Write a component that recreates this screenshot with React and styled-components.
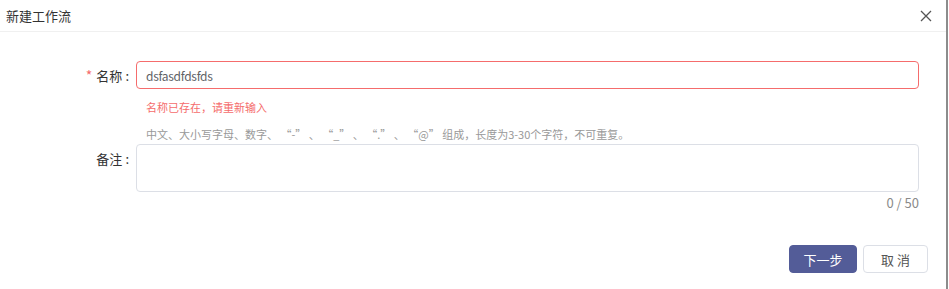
import React from "react";
import styled, { createGlobalStyle } from "styled-components";

const Global = createGlobalStyle`
  html, body { margin: 0; padding: 0; background: #fff; }
  body { font-family: "Noto Sans CJK SC", sans-serif; }
  * { box-sizing: border-box; }
`;

const Dialog = styled.div`
  width: 948px;
  height: 289px;
  background: #fff;
  border-right: 2px solid #8c8c8c;
  display: flex;
  flex-direction: column;
`;

const Header = styled.div`
  height: 32px;
  border-bottom: 1px solid #f0f0f0;
  display: flex;
  align-items: center;
  justify-content: space-between;
  padding: 0 14px 0 6px;
`;

const Title = styled.div`
  font-family: "Noto Sans CJK SC", sans-serif;
  font-size: 13px;
  color: #333;
`;

const Close = styled.button`
  border: 0;
  background: none;
  padding: 0;
  width: 13px;
  height: 13px;
  display: flex;
  align-items: center;
  justify-content: center;
  cursor: pointer;
`;

const Body = styled.div`
  padding: 29px 27px 0 0;
  display: flex;
  flex-direction: column;
`;

const Row = styled.div`
  display: grid;
  grid-template-columns: 136px 1fr;
  align-items: ${(p) => (p.$top ? "start" : "center")};
`;

const Label = styled.label`
  font-family: "Noto Sans CJK SC", sans-serif;
  font-size: 13px;
  color: #333;
  text-align: right;
  padding-right: 7px;
  ${(p) => p.$top && "padding-top: 5px;"}
`;

const Colon = styled.span`
  margin-left: 3px;
`;

const Star = styled.span`
  color: #f56c6c;
  margin-right: 4px;
  font-size: 14px;
`;

const Field = styled.div`
  display: flex;
  flex-direction: column;
`;

const Input = styled.input`
  height: 28px;
  border: 1px solid ${(p) => (p.$error ? "#f56c6c" : "#dcdfe6")};
  border-radius: 4px;
  padding: 0 9px;
  font-family: "Noto Sans CJK SC", sans-serif;
  font-size: 12px;
  letter-spacing: -0.3px;
  color: #606266;
  outline: none;
  width: 100%;
`;

const Error = styled.div`
  font-family: "Noto Sans CJK SC", sans-serif;
  font-size: 11px;
  color: #f56c6c;
  padding-left: 10px;
  margin-top: 10px;
  line-height: 16px;
`;

const Hint = styled.div`
  font-family: "Noto Sans CJK SC", sans-serif;
  font-size: 11px;
  color: #999;
  padding-left: 10px;
  margin-top: 11px;
  line-height: 16px;
  margin-bottom: 2px;
  white-space: pre;
`;

const TextArea = styled.textarea`
  height: 48px;
  border: 1px solid #dcdfe6;
  border-radius: 4px;
  resize: none;
  width: 100%;
  outline: none;
  display: block;
  font-family: "Noto Sans CJK SC", sans-serif;
`;

const Counter = styled.div`
  text-align: right;
  font-size: 13px;
  color: #8a8a8a;
  margin-top: 2px;
  line-height: 18px;
`;

const Footer = styled.div`
  display: flex;
  justify-content: flex-end;
  gap: 6px;
  padding: 33px 18px 0 0;
`;

const Button = styled.button`
  height: 28px;
  width: ${(p) => (p.$primary ? "68px" : "65px")};
  border-radius: 4px;
  font-family: "Noto Sans CJK SC", sans-serif;
  font-size: 13px;
  cursor: pointer;
  border: 1px solid ${(p) => (p.$primary ? "#535c98" : "#dcdfe6")};
  background: ${(p) => (p.$primary ? "#535c98" : "#fff")};
  color: ${(p) => (p.$primary ? "#fff" : "#555")};
  padding: 0;
`;

export default function App() {
  return (
    <>
      <Global />
      <Dialog>
        <Header>
          <Title>新建工作流</Title>
          <Close aria-label="close">
            <svg width="12" height="12" viewBox="0 0 12 12">
              <path d="M1 1L11 11M11 1L1 11" stroke="#555" strokeWidth="1.3" />
            </svg>
          </Close>
        </Header>
        <Body>
          <Row>
            <Label>
              <Star>*</Star>名称<Colon>:</Colon>
            </Label>
            <Input $error defaultValue="dsfasdfdsfds" />
          </Row>
          <Row>
            <div />
            <Field>
              <Error>名称已存在，请重新输入</Error>
              <Hint>中文、大小写字母、数字、 “-” 、 “_” 、 “.” 、 “@” 组成，长度为3-30个字符，不可重复。</Hint>
            </Field>
          </Row>
          <Row $top>
            <Label $top>
              备注<Colon>:</Colon>
            </Label>
            <Field>
              <TextArea />
              <Counter>0 / 50</Counter>
            </Field>
          </Row>
        </Body>
        <Footer>
          <Button $primary>下一步</Button>
          <Button>取 消</Button>
        </Footer>
      </Dialog>
    </>
  );
}
